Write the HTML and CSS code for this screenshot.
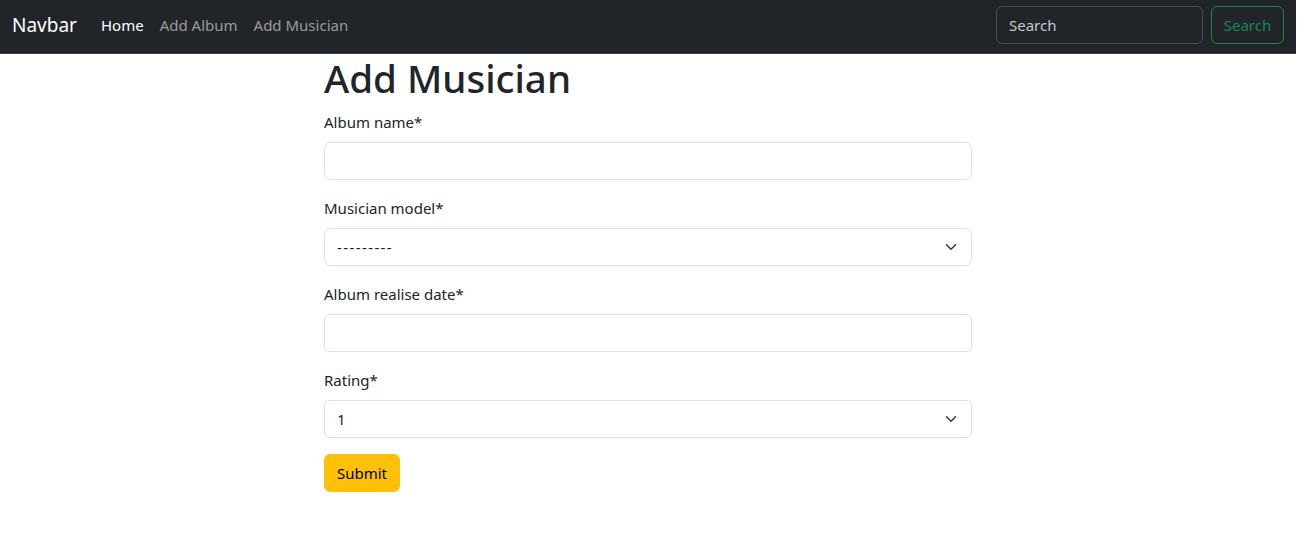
FILE: index.html
```html
<!DOCTYPE html>
<html>
<head>
<meta charset="utf-8">
<link rel="stylesheet" href="styles.css">
</head>
<body>
<div class="page">
  <nav class="navbar">
    <div class="nav-left">
      <span class="brand">Navbar</span>
      <a class="nav-link active">Home</a>
      <a class="nav-link">Add Album</a>
      <a class="nav-link">Add Musician</a>
    </div>
    <form class="nav-search">
      <input class="search-input" type="text" placeholder="Search">
      <button class="search-btn" type="button">Search</button>
    </form>
  </nav>
  <main class="content">
    <h1 class="title">Add Musician</h1>
    <div class="group">
      <label class="label">Album name*</label>
      <div class="control"></div>
    </div>
    <div class="group">
      <label class="label">Musician model*</label>
      <div class="control select"><span class="dashes">---------</span>
        <svg class="chev" viewBox="0 0 16 16" width="16" height="12"><path d="m2 5 6 6 6-6" fill="none" stroke="#343a40" stroke-width="2" stroke-linecap="round" stroke-linejoin="round"/></svg>
      </div>
    </div>
    <div class="group">
      <label class="label">Album realise date*</label>
      <div class="control"></div>
    </div>
    <div class="group">
      <label class="label">Rating*</label>
      <div class="control select"><span>1</span>
        <svg class="chev" viewBox="0 0 16 16" width="16" height="12"><path d="m2 5 6 6 6-6" fill="none" stroke="#343a40" stroke-width="2" stroke-linecap="round" stroke-linejoin="round"/></svg>
      </div>
    </div>
    <button class="submit" type="button">Submit</button>
  </main>
</div>
</body>
</html>
```
FILE: styles.css
```css
* { box-sizing: border-box; }
html, body { margin: 0; padding: 0; background: #fff; }
body {
  font-family: "Noto Sans", "Open Sans", sans-serif;
  color: #212529;
  font-size: 16px;
}
.page { width: 1296px; }
.navbar {
  height: 54px;
  background: #212529;
  display: flex;
  align-items: center;
  justify-content: space-between;
  padding: 6px 12px 9px;
  border-bottom: 1px solid #3a3f44;
}
.nav-left { display: flex; align-items: center; }
.brand {
  color: #fff;
  font-size: 19px;
  margin-right: 16px;
  line-height: 30px;
}
.nav-link {
  color: rgba(255,255,255,0.55);
  padding: 8px 8px;
  font-size: 15px;
  text-decoration: none;
}
.nav-link.active { color: #fff; }
.nav-search { display: flex; align-items: center; }
.search-input {
  width: 207px;
  height: 38px;
  background: #212529;
  border: 1px solid #495057;
  border-radius: 6px;
  color: #dee2e6;
  padding: 6px 12px;
  font: inherit;
  font-size: 15px;
  margin-right: 8px;
  outline: none;
}
.search-input::placeholder { color: #c5c9cd; }
.search-btn {
  height: 38px;
  width: 73px;
  background: transparent;
  border: 1px solid #198754;
  border-radius: 6px;
  color: #198754;
  font: inherit;
  font-size: 15px;
  padding: 0;
}
.content { width: 648px; margin-left: 324px; }
.title {
  margin: 0 0 8px;
  font-size: 38.5px;
  font-weight: 500;
  line-height: 48px;
}
.group { margin-bottom: 16px; }
.label {
  display: block;
  line-height: 24px;
  margin-bottom: 8px;
  font-size: 15px;
}
.control {
  height: 38px;
  border: 1px solid #dee2e6;
  border-radius: 6px;
  background: #fff;
  padding: 0 12px;
  display: flex;
  align-items: center;
  font-size: 15px;
}
.dashes { letter-spacing: 1.4px; }
.select { justify-content: space-between; padding-right: 12px; }
.chev { display: block; }
.submit {
  height: 38px;
  width: 76px;
  background: #ffc107;
  border: 1px solid #ffc107;
  border-radius: 6px;
  color: #000;
  font: inherit;
  font-size: 15px;
  padding: 0;
}
```
